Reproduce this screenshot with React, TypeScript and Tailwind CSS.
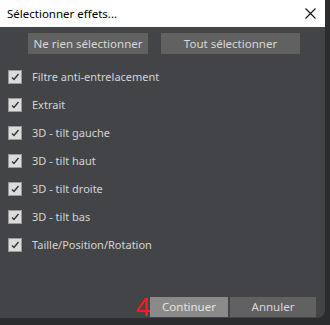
import { useState } from "react";

const effets = [
  "Filtre anti-entrelacement",
  "Extrait",
  "3D - tilt gauche",
  "3D - tilt haut",
  "3D - tilt droite",
  "3D - tilt bas",
  "Taille/Position/Rotation",
];

function CheckRow({ label, checked, onToggle }: { label: string; checked: boolean; onToggle: () => void }) {
  return (
    <label className="flex items-center h-[28px] pl-[8px] cursor-pointer" onClick={onToggle}>
      <span className="w-[14px] h-[14px] bg-[#dcdcdc] border border-[#9a9a9a] flex items-center justify-center">
        {checked && (
          <svg width="10" height="10" viewBox="0 0 10 10">
            <path d="M2 5.5 L4 7.5 L8.5 2" fill="none" stroke="#333" strokeWidth="1.4" />
          </svg>
        )}
      </span>
      <span className="ml-[10px] text-[11px] text-[#d4d4d4]">{label}</span>
    </label>
  );
}

export default function App() {
  const [checked, setChecked] = useState(effets.map(() => true));

  const toggle = (i: number) => {
    setChecked((prev) => prev.map((v, j) => (j === i ? !v : v)));
  };

  return (
    <div
      className="w-[330px] h-[325px] bg-[#2b2c2e] overflow-hidden"
      style={{ fontFamily: '"Noto Sans", "Open Sans", sans-serif' }}
    >
      <div className="w-[325px] h-[318px] bg-[#434447] rounded-br-[8px] flex flex-col">
        <div className="h-[27px] bg-white flex items-center justify-between pl-[7px] pr-[9px]">
          <span className="text-[11.5px] text-black">Sélectionner effets...</span>
          <svg width="11" height="11" viewBox="0 0 11 11">
            <path d="M0.5 0.5 L10.5 10.5 M10.5 0.5 L0.5 10.5" stroke="#111" strokeWidth="1.1" />
          </svg>
        </div>

        <div className="flex gap-[13px] pl-[28px] mt-[6px]">
          <button
            onClick={() => setChecked(effets.map(() => false))}
            className="w-[120px] h-[21px] bg-[#616161] text-[11.5px] text-[#d8d8d8]"
          >
            Ne rien sélectionner
          </button>
          <button
            onClick={() => setChecked(effets.map(() => true))}
            className="w-[139px] h-[21px] bg-[#616161] text-[11.5px] text-[#d8d8d8]"
          >
            Tout sélectionner
          </button>
        </div>

        <div className="flex flex-col mt-[9px]">
          {effets.map((e, i) => (
            <CheckRow key={e} label={e} checked={checked[i]} onToggle={() => toggle(i)} />
          ))}
        </div>

        <div className="flex-1" />

        <div className="flex items-end justify-end pr-[9px] mb-[1px]">
          <span className="text-[#ff1a1a] text-[25px] leading-none mb-[-2px]">4</span>
          <button className="w-[78px] h-[20px] bg-[#8a8a8a] text-[11.5px] text-[#e4e4e4]">Continuer</button>
          <button className="w-[86px] h-[20px] ml-[2px] bg-[#616161] text-[11.5px] text-[#d8d8d8]">Annuler</button>
        </div>
      </div>
    </div>
  );
}
